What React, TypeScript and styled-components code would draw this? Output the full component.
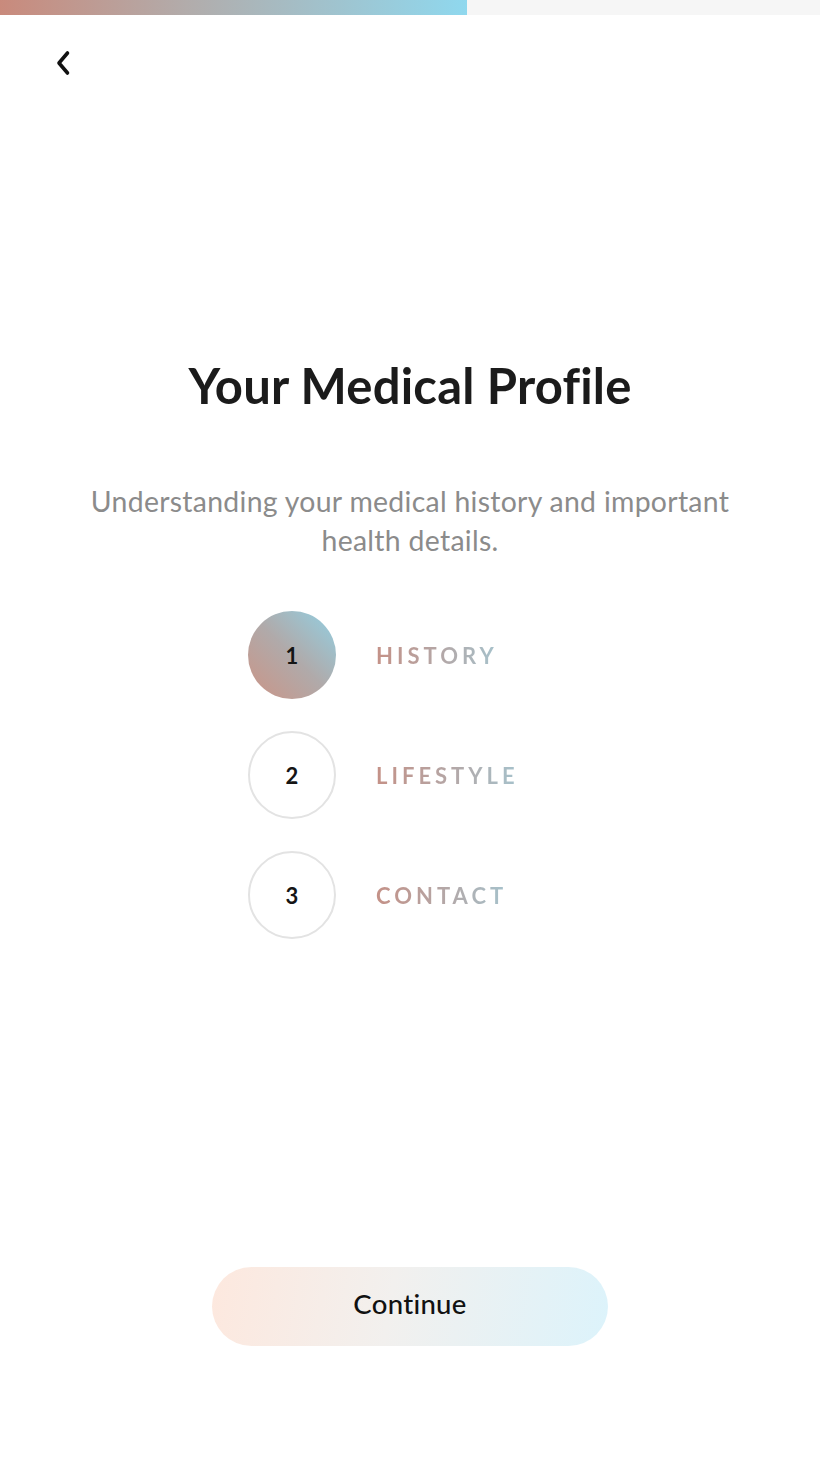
import React from 'react'
import styled, { createGlobalStyle } from 'styled-components'

const GlobalStyle = createGlobalStyle`
  html, body {
    margin: 0;
    padding: 0;
    background: #ffffff;
  }
  body {
    font-family: 'Lato', 'Noto Sans', sans-serif;
    color: #1c1c1c;
  }
`

const Screen = styled.div`
  width: 820px;
  min-height: 1458px;
  display: flex;
  flex-direction: column;
  background: #ffffff;
`

const ProgressTrack = styled.div`
  height: 15px;
  background: #f6f6f6;
  display: flex;
`

const ProgressFill = styled.div`
  height: 100%;
  background: linear-gradient(90deg, #c98a7c 0%, #b2acab 40%, #8fd8ee 100%);
`

const Header = styled.div`
  height: 96px;
  padding: 0 0 0 48px;
  display: flex;
  align-items: center;
`

const BackButton = styled.button`
  width: 30px;
  height: 30px;
  padding: 0;
  border: none;
  background: none;
  display: flex;
  align-items: center;
  justify-content: center;
  cursor: pointer;
`

const Content = styled.main`
  flex: 1;
  display: flex;
  flex-direction: column;
  align-items: center;
  padding-top: 246px;
`

const Title = styled.h1`
  margin: 0;
  font-size: 49px;
  font-weight: 700;
  line-height: 56px;
  color: #1b1b1b;
  letter-spacing: 0.2px;
`

const Subtitle = styled.p`
  margin: 69px 0 0;
  width: 680px;
  text-align: center;
  font-size: 28.4px;
  line-height: 39px;
  color: #8b8b8b;
  letter-spacing: 0.3px;
`

const StepList = styled.ol`
  list-style: none;
  margin: 51px 0 0;
  padding: 0;
  width: 324px;
  display: flex;
  flex-direction: column;
  gap: 32px;
`

const StepRow = styled.li`
  display: flex;
  align-items: center;
  gap: 40px;
`

const StepCircle = styled.div<{ $active?: boolean }>`
  width: 88px;
  height: 88px;
  border-radius: 50%;
  box-sizing: border-box;
  display: flex;
  align-items: center;
  justify-content: center;
  font-size: 22px;
  font-weight: 700;
  color: #151515;
  background: ${({ $active }) =>
    $active ? 'linear-gradient(45deg, #cb9486 0%, #b0aaaa 50%, #92d0e3 100%)' : '#ffffff'};
  border: ${({ $active }) => ($active ? 'none' : '2px solid #e3e3e3')};
`

const StepLabel = styled.span`
  font-size: 22px;
  font-weight: 700;
  letter-spacing: 4px;
  background: linear-gradient(90deg, #c49187 0%, #b3a8a8 55%, #a6c2cc 100%);
  -webkit-background-clip: text;
  background-clip: text;
  color: transparent;
`

const Footer = styled.div`
  display: flex;
  justify-content: center;
  padding-bottom: 112px;
`

const ContinueButton = styled.button`
  width: 396px;
  height: 79px;
  padding: 0 0 6px;
  border: none;
  border-radius: 40px;
  background: linear-gradient(100deg, #fde8de 0%, #f2f0ee 45%, #dcf3fb 100%);
  font-family: inherit;
  font-size: 27.5px;
  font-weight: 500;
  color: #111111;
  letter-spacing: 0.3px;
  cursor: pointer;
`

const steps = ['HISTORY', 'LIFESTYLE', 'CONTACT']

export default function App() {
  return (
    <Screen>
      <GlobalStyle />
      <ProgressTrack>
        <ProgressFill style={{ width: `${(467 / 820) * 100}%` }} />
      </ProgressTrack>
      <Header>
        <BackButton aria-label="Back">
          <svg width="18" height="26" viewBox="0 0 18 26" fill="none">
            <path d="M13.5 3 L5 13 L13.5 23" stroke="#111" strokeWidth="3.6" strokeLinecap="round" strokeLinejoin="round" />
          </svg>
        </BackButton>
      </Header>
      <Content>
        <Title>Your Medical Profile</Title>
        <Subtitle>Understanding your medical history and important health details.</Subtitle>
        <StepList>
          {steps.map((label, i) => (
            <StepRow key={label}>
              <StepCircle $active={i === 0}>{i + 1}</StepCircle>
              <StepLabel>{label}</StepLabel>
            </StepRow>
          ))}
        </StepList>
      </Content>
      <Footer>
        <ContinueButton>Continue</ContinueButton>
      </Footer>
    </Screen>
  )
}
